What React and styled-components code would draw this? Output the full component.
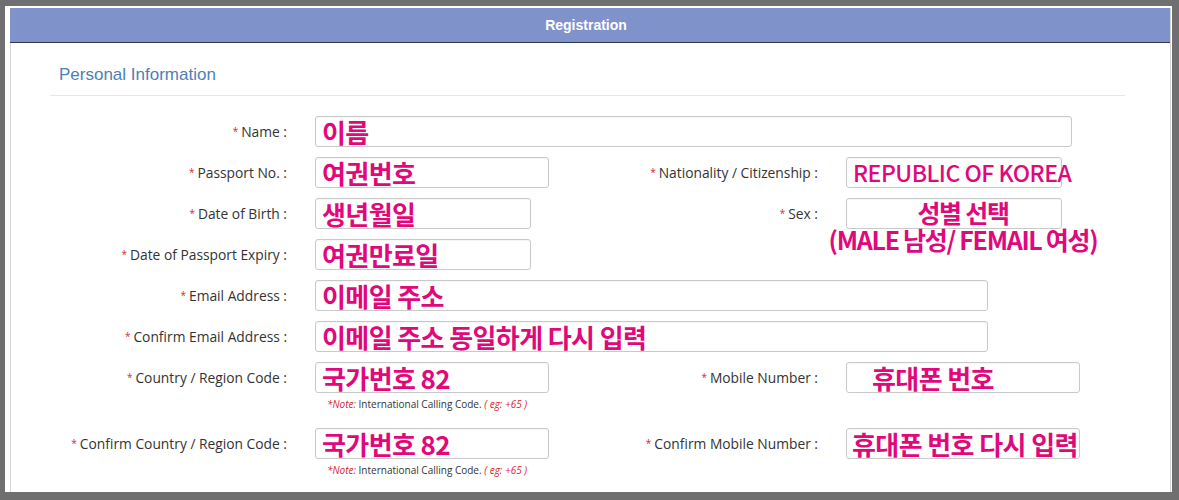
import React from "react"
import styled, { createGlobalStyle } from "styled-components"

const Global = createGlobalStyle`
  * { box-sizing: border-box; }
  html, body, #root { height: 100%; }
  body {
    margin: 0;
    background: #6f6f6f;
    font-family: "Open Sans", "Noto Sans", sans-serif;
  }
  #root { padding: 6px 7px 8px 5px; }
`

const Frame = styled.div`
  height: 100%;
  background: #fff;
  padding: 2px 1px 0 5px;
`

const Panel = styled.div`
  height: 100%;
  border-left: 1px solid #d6d6d6;
  border-right: 1px solid #d6d6d6;
`

const Header = styled.div`
  height: 35px;
  margin-left: -1px;
  padding-right: 8px;
  background: #7f92ca;
  border-bottom: 1px solid #2b3a4c;
  color: #fff;
  font-family: "Liberation Sans", Arial, sans-serif;
  font-weight: bold;
  font-size: 14px;
  display: flex;
  align-items: center;
  justify-content: center;
`

const Section = styled.div`
  padding: 22px 0 0 39px;
  width: 1114px;
`

const Title = styled.h2`
  margin: 0;
  padding-left: 9px;
  font-family: "Liberation Sans", Arial, sans-serif;
  font-weight: normal;
  font-size: 17px;
  line-height: 20px;
  color: #4d80b6;
`

const Rule = styled.hr`
  margin: 10px 0 20px;
  border: 0;
  border-top: 1px solid #e6e6e6;
`

const Form = styled.div`
  display: grid;
  grid-template-columns: 237px 234px 241px 234px;
  column-gap: 28px;
  row-gap: 10px;
`

const Label = styled.div`
  grid-column: ${(p) => p.col};
  height: 31px;
  display: flex;
  align-items: center;
  justify-content: flex-end;
  font-size: 13.8px;
  color: #333;
  white-space: nowrap;
`

const Star = styled.span`
  color: #d8262e;
  font-size: 10px;
  margin-right: 3px;
  position: relative;
  top: -1px;
`

const Cell = styled.div`
  grid-column: ${(p) => p.span || "auto"};
  padding-bottom: ${(p) => (p.note ? "8px" : "0")};
`

const Box = styled.div`
  width: ${(p) => p.w}px;
  height: 31px;
  border: 1px solid #c9c9c9;
  border-radius: 3px;
  background: #fff;
  box-shadow: inset 0 1px 1px rgba(0, 0, 0, 0.04);
  display: flex;
  flex-direction: column;
  align-items: ${(p) => (p.center ? "center" : "flex-start")};
  padding-left: ${(p) => p.pad ?? 6}px;
  overflow: visible;
  white-space: nowrap;
`

const Value = styled.span`
  color: #e0087a;
  font-family: "Noto Sans CJK KR", "Noto Sans", sans-serif;
  font-weight: bold;
  font-size: 26px;
  line-height: 29px;
  letter-spacing: -0.6px;
`

const Latin = styled(Value)`
  font-size: 23px;
  letter-spacing: -0.5px;
  font-weight: 500;
`

const Stack = styled.div`
  display: flex;
  flex-direction: column;
  align-items: center;
  line-height: 27px;
  color: #e0087a;
  font-family: "Noto Sans CJK KR", "Noto Sans", sans-serif;
  font-weight: bold;
  font-size: 25px;
  letter-spacing: -1.3px;
  margin-left: 18px;
`

const Note = styled.div`
  margin: 6px 0 0 12px;
  font-size: 10px;
  line-height: 11px;
  color: #333;
  white-space: nowrap;
  em {
    color: #d8262e;
  }
`

const L = ({ col, children }) => (
  <Label col={col}>
    <Star>*</Star>
    {children}
  </Label>
)

const CodeNote = () => (
  <Note>
    <em>*Note:</em> International Calling Code. <em>( eg: +65 )</em>
  </Note>
)

export default function App() {
  return (
    <>
      <Global />
      <Frame>
        <Panel>
          <Header>Registration</Header>
          <Section>
            <Title>Personal Information</Title>
            <Rule />
            <Form>
              <L col="1">Name :</L>
              <Cell span="2 / -1">
                <Box w={757}>
                  <Value>이름</Value>
                </Box>
              </Cell>

              <L col="1">Passport No. :</L>
              <Cell>
                <Box w={234}>
                  <Value>여권번호</Value>
                </Box>
              </Cell>
              <L col="3">Nationality / Citizenship :</L>
              <Cell>
                <Box w={216}>
                  <Latin>REPUBLIC OF KOREA</Latin>
                </Box>
              </Cell>

              <L col="1">Date of Birth :</L>
              <Cell>
                <Box w={216}>
                  <Value>생년월일</Value>
                </Box>
              </Cell>
              <L col="3">Sex :</L>
              <Cell>
                <Box w={216} pad={0} center>
                  <Stack>
                    <span>성별 선택</span>
                    <span>(MALE 남성/ FEMAIL 여성)</span>
                  </Stack>
                </Box>
              </Cell>

              <L col="1">Date of Passport Expiry :</L>
              <Cell span="2 / -1">
                <Box w={216}>
                  <Value>여권만료일</Value>
                </Box>
              </Cell>

              <L col="1">Email Address :</L>
              <Cell span="2 / -1">
                <Box w={673}>
                  <Value>이메일 주소</Value>
                </Box>
              </Cell>

              <L col="1">Confirm Email Address :</L>
              <Cell span="2 / -1">
                <Box w={673}>
                  <Value>이메일 주소 동일하게 다시 입력</Value>
                </Box>
              </Cell>

              <L col="1">Country / Region Code :</L>
              <Cell note>
                <Box w={234}>
                  <Value>국가번호 82</Value>
                </Box>
                <CodeNote />
              </Cell>
              <L col="3">Mobile Number :</L>
              <Cell>
                <Box w={234} pad={25}>
                  <Value>휴대폰 번호</Value>
                </Box>
              </Cell>

              <L col="1">Confirm Country / Region Code :</L>
              <Cell note>
                <Box w={234}>
                  <Value>국가번호 82</Value>
                </Box>
                <CodeNote />
              </Cell>
              <L col="3">Confirm Mobile Number :</L>
              <Cell>
                <Box w={234} pad={5}>
                  <Value>휴대폰 번호 다시 입력</Value>
                </Box>
              </Cell>
            </Form>
          </Section>
        </Panel>
      </Frame>
    </>
  )
}
